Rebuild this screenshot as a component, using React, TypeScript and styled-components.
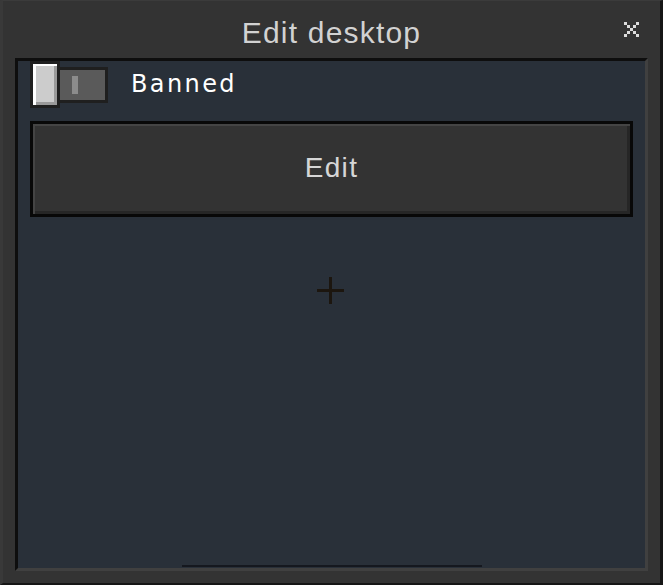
import React from 'react';
import styled, { createGlobalStyle } from 'styled-components';

const GlobalStyle = createGlobalStyle`
    html, body {
        margin: 0;
        padding: 0;
        background: #333333;
    }
    * {
        box-sizing: border-box;
    }
`
const Window = styled.div`
    width: 663px;
    height: 585px;
    display: flex;
    flex-direction: column;
    background: #333333;
    border-top: 1px solid #3b3b3b;
    border-left: 3px solid #393939;
    border-right: 3px solid #161616;
    border-bottom: 2px solid #161616;
    padding: 0 12px 12px;
    font-family: "Liberation Sans", Arial, sans-serif;
`
const TitleBar = styled.div`
    height: 57px;
    display: grid;
    grid-template-columns: 1fr auto 1fr;
    align-items: center;
`
const Title = styled.h1`
    grid-column: 2;
    margin: 0;
    padding-top: 7px;
    font-size: 30px;
    line-height: 30px;
    font-weight: normal;
    letter-spacing: 1.2px;
    color: #d2d2d2;
`
const CloseButton = styled.button`
    grid-column: 3;
    justify-self: end;
    margin-right: 9px;
    width: 15px;
    height: 15px;
    padding: 0;
    border: none;
    background: none;
    display: flex;
    cursor: pointer;
`
const Panel = styled.div`
    flex: 1;
    position: relative;
    overflow: hidden;
    display: flex;
    flex-direction: column;
    padding: 0 12px;
    background: #293039;
    border-top: 3px solid #0e0e0e;
    border-left: 3px solid #0e0e0e;
    border-right: 3px solid #404040;
    border-bottom: 3px solid #404040;
`
const ToggleRow = styled.div`
    height: 47px;
    display: flex;
    align-items: center;
    gap: 23px;
`
const Toggle = styled.div`
    display: flex;
    align-items: center;
`
const Knob = styled.div`
    position: relative;
    z-index: 1;
    width: 30px;
    height: 47px;
    border: 3px solid #1f1f1f;
    background: #cccccc;
    box-shadow: inset 3px 2px 0 #ffffff, inset -3px -3px 0 #9a9a9a;
`
const Track = styled.div`
    width: 51px;
    height: 36px;
    margin-left: -3px;
    border: 3px solid #1f1f1f;
    background: #5a5a5a;
    display: flex;
    align-items: center;
    padding-left: 12px;
`
const TrackMark = styled.span`
    width: 6px;
    height: 18px;
    background: #8c8c8c;
`
const Label = styled.span`
    font-family: "DejaVu Sans", "Liberation Sans", sans-serif;
    font-size: 24px;
    line-height: 24px;
    letter-spacing: 2.4px;
    color: #ffffff;
    margin-top: -2px;
`
const ActionButton = styled.button`
    margin-top: 13px;
    height: 96px;
    width: 100%;
    border: 3px solid #080808;
    background: #333333;
    box-shadow: inset 2px 2px 0 #444444, inset -3px -3px 0 #262626;
    font-family: "Liberation Sans", Arial, sans-serif;
    font-size: 28px;
    line-height: 28px;
    letter-spacing: 1.3px;
    color: #d6d6d6;
    padding: 0 0 2px;
    cursor: pointer;
`
const Crosshair = styled.svg`
    position: absolute;
    left: 299px;
    top: 216px;
    width: 27px;
    height: 27px;
    pointer-events: none;
`
const ScrollThumb = styled.div`
    position: absolute;
    bottom: 1px;
    left: 164px;
    width: 300px;
    height: 2px;
    background: #15181f;
`

const App: React.FC = () => {
  return (
    <>
      <GlobalStyle />
      <Window>
        <TitleBar>
          <Title>Edit desktop</Title>
          <CloseButton aria-label="Close">
            <svg width="15" height="15" viewBox="0 0 5 5" shapeRendering="crispEdges">
              {[[0, 0], [4, 0], [1, 1], [3, 1], [2, 2], [1, 3], [3, 3], [0, 4], [4, 4]].map(([x, y]) => (
                <rect key={`${x}-${y}`} x={x} y={y} width="1" height="1" fill="#dcdcdc" />
              ))}
            </svg>
          </CloseButton>
        </TitleBar>
        <Panel>
          <ToggleRow>
            <Toggle>
              <Knob />
              <Track>
                <TrackMark />
              </Track>
            </Toggle>
            <Label>Banned</Label>
          </ToggleRow>
          <ActionButton>Edit</ActionButton>
          <Crosshair viewBox="0 0 27 27" shapeRendering="crispEdges">
            <rect x="12" y="0" width="3" height="27" fill="#1c160f" />
            <rect x="0" y="12" width="27" height="3" fill="#1c160f" />
          </Crosshair>
          <ScrollThumb />
        </Panel>
      </Window>
    </>
  );
};

export default App;
